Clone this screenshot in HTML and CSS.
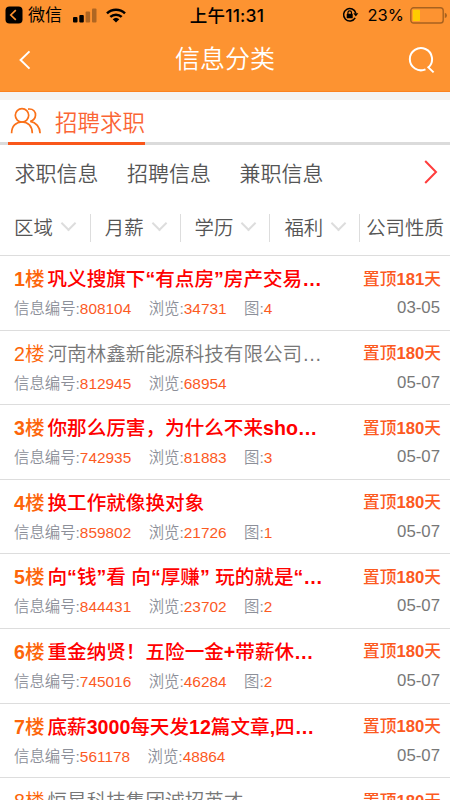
FILE: index.html
```html
<!DOCTYPE html>
<html lang="zh-CN">
<head>
<meta charset="utf-8">
<title>信息分类</title>
<link rel="stylesheet" href="styles.css">
</head>
<body>
<header class="top">
  <div class="status">
    <div class="status-left">
      <svg class="back-app" width="18" height="18" viewBox="0 0 18 18"><rect x=".5" y=".5" width="17" height="17" rx="4" fill="#000"/><path d="M10.8 4.2 5.8 9l5 4.8" fill="none" stroke="#fd9331" stroke-width="1.7"/></svg>
      <span class="app">微信</span>
      <svg class="signal" width="24" height="15" viewBox="0 0 24 15"><rect x="0" y="9" width="4.5" height="5.500" rx="1"/><rect x="6.3" y="7" width="4.5" height="7.500" rx="1"/><g opacity=".3"><rect x="12.6" y="3.5" width="4.5" height="11" rx="1"/><rect x="19" y=".5" width="4.5" height="14" rx="1"/></g></svg>
      <svg width="20" height="15" viewBox="0 0 20 15"><g fill="none" stroke="#000" stroke-width="2.5"><path d="M1 5.4a13 13 0 0 1 18 0"/><path d="M4.3 8.9a8.4 8.4 0 0 1 11.4 0"/></g><path d="M10 14.5 6.7 11.3a4.8 4.8 0 0 1 6.6 0z"/></svg>
    </div>
    <div class="clock">上午11:31</div>
    <div class="status-right">
      <svg width="17" height="16" viewBox="0 0 17 16"><path d="M13.2 10.8A6.2 6.2 0 1 1 13.8 6.2" fill="none" stroke="#000" stroke-width="1.5"/><path d="M11.3 6.2h5l-2.5 3.2z"/><rect x="4.7" y="6.8" width="6" height="4.5" rx=".6"/><path d="M5.9 7V5.7a1.8 1.8 0 0 1 3.6 0V7" fill="none" stroke="#000" stroke-width="1.2"/></svg>
      <span class="percent">23%</span>
      <svg width="38" height="17" viewBox="0 0 38 17"><rect x=".8" y=".8" width="32.4" height="15.2" rx="2.8" fill="none" stroke="#a8621f" stroke-width="1.4"/><rect x="2.8" y="2.8" width="7.2" height="11.2" rx=".8" fill="#ffcc00"/><path d="M34.8 5.8q2.2.6 2.2 2.6t-2.2 2.6z" fill="#a8621f"/></svg>
    </div>
  </div>
  <div class="nav">
    <svg width="12" height="20" viewBox="0 0 12 20"><path d="M10.5 1.4 1.6 10l8.9 8.6" fill="none" stroke="#fff" stroke-width="2"/></svg>
    <h1>信息分类</h1>
    <svg width="28" height="28" viewBox="0 0 28 28"><path d="M17.5 23.3A11.1 11.1 0 1 1 20.4 21.4M19.6 20.6l6 5.8" fill="none" stroke="#fff" stroke-width="2"/></svg>
  </div>
</header>
<div class="tabs">
  <div class="tab">
    <svg width="32" height="28" viewBox="0 0 32 28"><g fill="none" stroke="#fa7119" stroke-width="1.7"><ellipse cx="12" cy="8.3" rx="6.7" ry="6.7"/><path d="M1.6 26.2C1.6 19 6 15 12 15s10.3 4 10.3 11.2M18 2.1c5.600-.7 7.800 3 7.500 6.200-.3 3.600-2.400 5.200-5.200 6C26 15.400 30 20 30.100 26.200"/></g></svg>
    <span>招聘求职</span>
  </div>
</div>
<nav class="subs">
  <span>求职信息</span><span>招聘信息</span><span>兼职信息</span>
  <svg class="more" width="14" height="24" viewBox="0 0 14 24"><path d="M1.200 1 12 12 1.200 23" fill="none" stroke="#ff3d3d" stroke-width="2"/></svg>
</nav>
<div class="filters">
  <div class="filter">区域<i></i></div>
  <div class="filter">月薪<i></i></div>
  <div class="filter">学历<i></i></div>
  <div class="filter">福利<i></i></div>
  <div class="filter last">公司性质</div>
</div>
<main>
  <article class="row hot"><div class="line"><span class="floor"><b>1</b>楼</span><h2>巩义搜旗下<b>“</b>有点房<b>”</b>房产交易<b>…</b></h2><span class="pin">置顶<b>181</b>天</span></div><div class="meta"><span>信息编号:<em>808104</em></span><span>浏览:<em>34731</em></span><span>图:<em>4</em></span><time>03-05</time></div></article>
  <article class="row"><div class="line"><span class="floor">2楼</span><h2>河南林鑫新能源科技有限公司…</h2><span class="pin">置顶<b>180</b>天</span></div><div class="meta"><span>信息编号:<em>812945</em></span><span>浏览:<em>68954</em></span><time>05-07</time></div></article>
  <article class="row hot"><div class="line"><span class="floor"><b>3</b>楼</span><h2>你那么厉害，为什么不来<b>sho…</b></h2><span class="pin">置顶<b>180</b>天</span></div><div class="meta"><span>信息编号:<em>742935</em></span><span>浏览:<em>81883</em></span><span>图:<em>3</em></span><time>05-07</time></div></article>
  <article class="row hot"><div class="line"><span class="floor"><b>4</b>楼</span><h2>换工作就像换对象</h2><span class="pin">置顶<b>180</b>天</span></div><div class="meta"><span>信息编号:<em>859802</em></span><span>浏览:<em>21726</em></span><span>图:<em>1</em></span><time>05-07</time></div></article>
  <article class="row hot"><div class="line"><span class="floor"><b>5</b>楼</span><h2>向<b>“</b>钱<b>”</b>看 向<b>“</b>厚赚<b>”</b> 玩的就是<b>“…</b></h2><span class="pin">置顶<b>180</b>天</span></div><div class="meta"><span>信息编号:<em>844431</em></span><span>浏览:<em>23702</em></span><span>图:<em>2</em></span><time>05-07</time></div></article>
  <article class="row hot"><div class="line"><span class="floor"><b>6</b>楼</span><h2>重金纳贤！五险一金<b>+</b>带薪休<b>…</b></h2><span class="pin">置顶<b>180</b>天</span></div><div class="meta"><span>信息编号:<em>745016</em></span><span>浏览:<em>46284</em></span><span>图:<em>2</em></span><time>05-07</time></div></article>
  <article class="row hot"><div class="line"><span class="floor"><b>7</b>楼</span><h2>底薪<b>3000</b>每天发<b>12</b>篇文章<b>,</b>四<b>…</b></h2><span class="pin">置顶<b>180</b>天</span></div><div class="meta"><span>信息编号:<em>561178</em></span><span>浏览:<em>48864</em></span><time>05-07</time></div></article>
  <article class="row"><div class="line"><span class="floor">8楼</span><h2>恒星科技集团诚招英才</h2><span class="pin">置顶<b>180</b>天</span></div></article>
</main>
</body>
</html>
```
FILE: styles.css
```css
* { box-sizing: border-box; }
html, body { height: 800px; overflow: hidden; }
body {
  margin: 0;
  display: flex;
  flex-direction: column;
  background: #fff;
  font-family: "Liberation Sans", "Noto Sans CJK SC", sans-serif;
  font-weight: 350;
  color: #555;
  white-space: nowrap;
}
b { font-weight: 700; }
svg { display: block; flex: none; }
.top, .tabs, .subs, .filters { flex: none; }
.top { height: 92px; background: #fd9331; border-bottom: 1px solid #fb8322; }
.status {
  height: 29px;
  display: grid;
  grid-template-columns: 1fr auto 1fr;
  align-items: center;
  padding: 0 7px 0 5px;
  color: #000;
  font: 500 17.500px/29px Inter, "Noto Sans CJK SC", sans-serif;
}
.status-left, .status-right { display: flex; align-items: center; }
.status-left { font-weight: 400; }
.app { margin: 0 11px 0 5px; font-size: 17px; }
.signal { margin-right: 9px; }
.clock { font-size: 17.500px; letter-spacing: .2px; margin-left: 6px; }
.status-right { justify-content: flex-end; margin-right: -5px; }
.percent { margin: 1px 6px 0 9px; font-size: 16.500px; font-weight: 400; }
.nav {
  height: 62px;
  display: grid;
  grid-template-columns: 1fr auto 1fr;
  align-items: center;
  padding: 0 14px 0 14px;
  color: #fff;
}
.nav svg:first-child { margin-left: 5px; }
.nav h1 { margin: -2px 0 0; font-size: 25px; font-weight: 350; line-height: 62px; }
.nav svg:last-child { justify-self: end; }
.tabs {
  height: 53px;
  border-top: 8px solid #f4f4f4;
  box-shadow: inset 0 -3px #dbdbdb;
  padding-left: 8px;
}
.tab {
  width: 137px;
  height: 45px;
  border-bottom: 3px solid #f9571b;
  display: flex;
  align-items: center;
  padding-left: 2px;
  gap: 13px;
  font-size: 22.500px;
  color: #fb6534;
}
.tab span { margin-top: -1px; }
.subs {
  height: 55px;
  display: flex;
  align-items: center;
  gap: 28.500px;
  padding: 0 12px 0 14.500px;
  font-size: 21px;
}
.subs span { margin-top: -2px; }
.more { margin: -1px 0 0 auto; }
.filters {
  height: 56px;
  display: flex;
  align-items: center;
  border-bottom: 1px solid #ddd;
  font-size: 19.400px;
}
.filter {
  width: 90px;
  height: 28px;
  line-height: 30px;
  display: flex;
  align-items: center;
  padding-left: 14px;
  border-right: 1px solid #ddd;
}
.filter:first-child { width: 91px; }
.filter i {
  width: 11px;
  height: 11px;
  margin: -8px 0 0 10px;
  border: solid #ddd;
  border-width: 0 2px 2px 0;
  transform: rotate(45deg);
}
.filter.last { padding-left: 6px; border: 0; }
main { flex: 1; min-height: 0; overflow: hidden; }
.row {
  height: 74.600px;
  padding: 9px 9px 0 14px;
  border-bottom: 1px solid #ddd;
}
.row:last-child { height: 22px; border: 0; }
.line { height: 28px; display: flex; align-items: center; line-height: 28px; }
.floor { width: 33.500px; font-size: 19.600px; color: #fd6509; }
.hot .floor { font-weight: 500; }
.line h2 { margin: 0; font-size: 19.600px; font-weight: 350; color: #777; }
.hot h2 { font-weight: 500; color: #f00; }
.pin { margin: 1px 0 0 auto; font-size: 16.700px; font-weight: 500; color: #fc5a1f; }
.meta {
  height: 32px;
  display: flex;
  align-items: center;
  gap: 17.500px;
  font-size: 15.400px;
  line-height: 32px;
  color: #8c8f99;
}
.meta em { font-style: normal; color: #fc5a1f; }
.meta time { margin: -2px 1px 0 auto; font-size: 16.800px; color: #777; }
```
